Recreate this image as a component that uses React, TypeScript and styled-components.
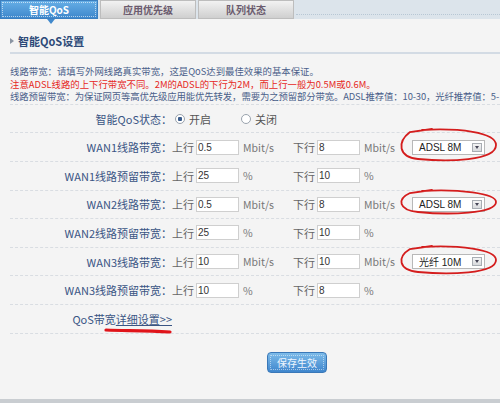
import styled, { createGlobalStyle } from "styled-components";

const Global = createGlobalStyle`
  html, body {
    margin: 0;
    padding: 0;
    background: #f4f4f4;
    font-family: "Noto Sans CJK SC", "Noto Sans", sans-serif;
  }
`;

const Page = styled.div`
  width: 500px;
  height: 403px;
  overflow: hidden;
  box-sizing: border-box;
  border-bottom: 4px solid #c9cdd1;
  background: #f4f4f4;
`;

// Tabs TOP
const TabBar = styled.div`
  display: flex;
  height: 19px;
  background: #dce4eb;
`;

const Tab = styled.div<{ $active?: boolean }>`
  position: relative;
  width: ${(p) => (p.$active ? "98px" : "96px")};
  margin-right: 2px;
  display: flex;
  align-items: center;
  justify-content: center;
  font-size: 10px;
  font-weight: bold;
  color: ${(p) => (p.$active ? "#ffffff" : "#6b5b6e")};
  background: ${(p) =>
    p.$active
      ? "linear-gradient(#66aee6, #3f88cc)"
      : "linear-gradient(#f2f2f2, #cfcfcf)"};
  border: 1px solid ${(p) => (p.$active ? "#3b7fc0" : "#bdbdbd")};
  box-sizing: border-box;
  outline: ${(p) => (p.$active ? "1px dotted rgba(255,255,255,0.6)" : "none")};
  outline-offset: -3px;
`;

const TabArrow = styled.span`
  position: absolute;
  left: 46px;
  bottom: -6px;
  width: 0;
  height: 0;
  border-left: 4px solid transparent;
  border-right: 4px solid transparent;
  border-top: 5px solid #4189cc;
`;

const TabFill = styled.div`
  flex: 1;
  border-bottom: 1px dotted #b8c7d4;
  height: 14px;
`;

// Content
const Content = styled.div`
  padding: 0 0 0 10px;
`;

const Heading = styled.div`
  margin-top: 14px;
  display: flex;
  align-items: center;
  gap: 4px;
  height: 16px;
  font-size: 11px;
  font-weight: bold;
  color: #2d4a78;
  border-bottom: 2px solid #d3dbe4;
  padding-bottom: 3px;
`;

const HeadArrow = styled.span`
  width: 0;
  height: 0;
  border-top: 3px solid transparent;
  border-bottom: 3px solid transparent;
  border-left: 4px solid #8a95a3;
`;

const Notes = styled.div`
  margin-top: 11px;
  font-size: 9.4px;
  line-height: 12.6px;
  white-space: nowrap;
  padding-bottom: 1px;
  border-bottom: 1px dashed #d9dde2;
`;

const Note = styled.div<{ $red?: boolean; $tight?: boolean }>`
  color: ${(p) => (p.$red ? "#e6281e" : "#4b5f8a")};
  letter-spacing: ${(p) => (p.$tight ? "-0.12px" : "0")};
`;

const Row = styled.div`
  display: flex;
  align-items: center;
  height: 28.6px;
  box-sizing: border-box;
  border-bottom: 1px dashed #d9dde2;
  font-size: 11px;
`;

const Label = styled.div`
  position: relative;
  width: 162px;
  text-align: right;
  color: #3a5584;
  white-space: nowrap;
`;

const Group = styled.div<{ $w: number }>`
  display: flex;
  align-items: center;
  width: ${(p) => p.$w}px;
  color: #666;
  white-space: nowrap;
`;

const Dir = styled.span`
  color: #666;
  margin-right: 2px;
`;

const Box = styled.div`
  width: 43px;
  height: 15px;
  box-sizing: border-box;
  background: #fff;
  border: 1px solid #cfcfcf;
  font-family: "Liberation Sans", Arial, sans-serif;
  font-size: 10px;
  line-height: 13px;
  padding-left: 1px;
  color: #333;
`;

const Unit = styled.span`
  margin-left: 4px;
  color: #777;
  font-size: 10.5px;
`;

const Radio = styled.span<{ $on?: boolean }>`
  display: inline-block;
  width: 8px;
  height: 8px;
  border-radius: 50%;
  border: 1px solid #9aa3ad;
  background: ${(p) =>
    p.$on ? "radial-gradient(#3a5c8c 0 2px, #fff 2.5px)" : "#fff"};
  margin: 0 4px 0 3px;
`;

const RadioText = styled.span`
  color: #555;
  margin-right: 27px;
`;

const SelectWrap = styled.div`
  position: relative;
  margin-left: 16px;
  display: flex;
  align-items: center;
  width: 73px;
  height: 15px;
  box-sizing: border-box;
  background: #fff;
  border: 1px solid #b8b8b8;
  padding-left: 6px;
  font-family: "Liberation Sans", "Noto Sans CJK SC", sans-serif;
  font-size: 10px;
  color: #222;
`;

const SelectBtn = styled.span`
  margin-left: auto;
  margin-right: 2px;
  width: 10px;
  height: 9px;
  box-sizing: border-box;
  border: 1px solid #a8adb3;
  background: linear-gradient(#f4f4f4, #d8dadd);
  display: flex;
  align-items: center;
  justify-content: center;
  &::after {
    content: "";
    border-left: 2.5px solid transparent;
    border-right: 2.5px solid transparent;
    border-top: 3px solid #445;
  }
`;

const Circle = styled.svg`
  position: absolute;
  left: -15px;
  overflow: visible;
`;

const Link = styled.span`
  color: #3a5584;
`;

const LinkU = styled.span`
  text-decoration: underline;
`;

const Scribble = styled.svg`
  position: absolute;
  right: 0;
  top: 17px;
  overflow: visible;
`;

const ButtonRow = styled.div`
  padding: 14px 0 0 257px;
`;

const SaveBtn = styled.button`
  width: 60px;
  height: 21px;
  border: 1px solid #3a78b8;
  border-radius: 4px;
  background: linear-gradient(#7dbbe9, #3f86cd);
  color: #eef6ff;
  font-family: "Noto Sans CJK SC", sans-serif;
  font-size: 10px;
  padding: 0;
  outline: 1px dotted rgba(255, 255, 255, 0.5);
  outline-offset: -4px;
`;

interface Line {
  label: string;
  up: string;
  down: string;
  unit: string;
  select?: string;
  ry?: number;
}

const lines: Line[] = [
  { label: "WAN1线路带宽：", up: "0.5", down: "8", unit: "Mbit/s", select: "ADSL 8M", ry: 16 },
  { label: "WAN1线路预留带宽：", up: "25", down: "10", unit: "%" },
  { label: "WAN2线路带宽：", up: "0.5", down: "8", unit: "Mbit/s", select: "ADSL 8M", ry: 12 },
  { label: "WAN2线路预留带宽：", up: "25", down: "10", unit: "%" },
  { label: "WAN3线路带宽：", up: "10", down: "10", unit: "Mbit/s", select: "光纤 10M", ry: 14 },
  { label: "WAN3线路预留带宽：", up: "10", down: "8", unit: "%" },
];

// hand-drawn red ring round the select
const Ellipse = ({ ry }: { ry: number }) => {
  const h = ry * 2 + 2;
  const cy = ry + 1;
  return (
    <Circle width="100" height={h} style={{ top: 6.5 - cy - 2 }}>
      <path
        d={`M 24 ${cy - ry + 1} C 60 ${cy - ry - 1}, 98 ${cy - ry + 3}, 98 ${cy} C 98 ${cy + ry}, 50 ${cy + ry + 1}, 20 ${cy + ry - 2} C 0 ${cy + ry - 4}, -1 ${cy - 3}, 12 ${cy - ry + 3} L 34 ${cy - ry}`}
        fill="none"
        stroke="#d41d1d"
        strokeWidth="1.8"
        strokeLinecap="round"
      />
    </Circle>
  );
};

const App = () => {
  return (
    <Page>
      <Global />
      <TabBar>
        <Tab $active>
          智能QoS
          <TabArrow />
        </Tab>
        <Tab>应用优先级</Tab>
        <Tab>队列状态</Tab>
        <TabFill />
      </TabBar>
      <Content>
        <Heading>
          <HeadArrow />
          智能QoS设置
        </Heading>
        <Notes>
          <Note>线路带宽：请填写外网线路真实带宽，这是QoS达到最佳效果的基本保证。</Note>
          <Note $red>注意ADSL线路的上下行带宽不同。2M的ADSL的下行为2M，而上行一般为0.5M或0.6M。</Note>
          <Note $tight>线路预留带宽：为保证网页等高优先级应用能优先转发，需要为之预留部分带宽。ADSL推荐值：10-30，光纤推荐值：5-</Note>
        </Notes>
        <Row>
          <Label>智能QoS状态：</Label>
          <Radio $on />
          <RadioText>开启</RadioText>
          <Radio />
          <RadioText>关闭</RadioText>
        </Row>
        {lines.map((item) => (
          <Row key={item.label}>
            <Label>{item.label}</Label>
            <Group $w={121}>
              <Dir>上行</Dir>
              <Box>{item.up}</Box>
              <Unit>{item.unit}</Unit>
            </Group>
            <Group $w={103}>
              <Dir>下行</Dir>
              <Box>{item.down}</Box>
              <Unit>{item.unit}</Unit>
            </Group>
            {item.select && (
              <SelectWrap>
                {item.select}
                <SelectBtn />
                <Ellipse ry={item.ry ?? 14} />
              </SelectWrap>
            )}
          </Row>
        ))}
        <Row>
          <Label>
            <Link>
              QoS带宽<LinkU>详细设置&gt;&gt;</LinkU>
            </Link>
            <Scribble width="68" height="6">
              <path d="M 2 2 C 20 3, 40 2, 66 4" stroke="#e0141a" strokeWidth="3.2" strokeLinecap="round" fill="none" />
            </Scribble>
          </Label>
        </Row>
        <ButtonRow>
          <SaveBtn>保存生效</SaveBtn>
        </ButtonRow>
      </Content>
    </Page>
  );
};

export default App;
